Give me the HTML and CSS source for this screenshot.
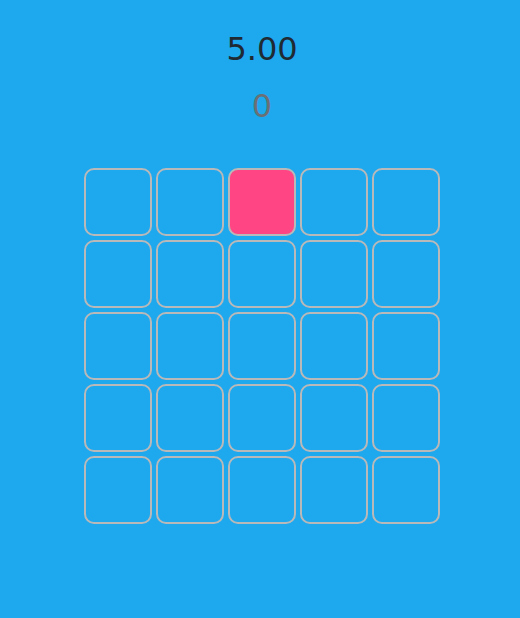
FILE: index.html
```html
<!DOCTYPE html>
<html>
<head>
<meta charset="utf-8">
<link rel="stylesheet" href="styles.css">
</head>
<body>
<div class="app">
  <div class="timer">5.00</div>
  <div class="score">0</div>
  <div class="grid">
    <div class="cell"></div><div class="cell"></div><div class="cell active"></div><div class="cell"></div><div class="cell"></div>
    <div class="cell"></div><div class="cell"></div><div class="cell"></div><div class="cell"></div><div class="cell"></div>
    <div class="cell"></div><div class="cell"></div><div class="cell"></div><div class="cell"></div><div class="cell"></div>
    <div class="cell"></div><div class="cell"></div><div class="cell"></div><div class="cell"></div><div class="cell"></div>
    <div class="cell"></div><div class="cell"></div><div class="cell"></div><div class="cell"></div><div class="cell"></div>
  </div>
</div>
</body>
</html>
```
FILE: styles.css
```css
html, body {
  margin: 0;
  padding: 0;
  background: #1ea8ee;
  height: 100%;
}
.app {
  display: flex;
  flex-direction: column;
  align-items: center;
  padding-left: 4px;
  padding-top: 27px;
  font-family: "DejaVu Sans", sans-serif;
}
.timer {
  font-size: 32px;
  line-height: 44px;
  color: #1f2a33;
}
.score {
  font-size: 32px;
  line-height: 44px;
  margin-top: 13px;
  color: #6b7075;
}
.grid {
  margin-top: 40px;
  display: grid;
  grid-template-columns: repeat(5, 68px);
  grid-auto-rows: 68px;
  gap: 4px;
}
.cell {
  box-sizing: border-box;
  border: 2px solid #b9b9b9;
  border-radius: 10px;
}
.cell.active {
  background: #ff4583;
}
```
